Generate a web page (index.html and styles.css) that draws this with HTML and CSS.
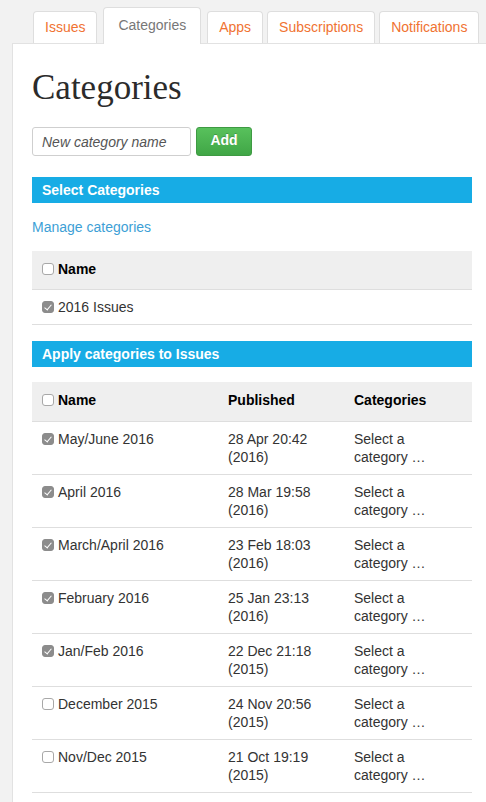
FILE: index.html
```html
<!DOCTYPE html>
<html>
<head>
<meta charset="utf-8">
<link rel="stylesheet" href="styles.css">
</head>
<body>
<nav class="tabs">
  <a class="tab">Issues</a>
  <a class="tab active">Categories</a>
  <a class="tab">Apps</a>
  <a class="tab">Subscriptions</a>
  <a class="tab">Notifications</a>
</nav>
<main class="panel">
  <h1 class="title">Categories</h1>
  <form class="add-form">
    <input class="name-input" type="text" placeholder="New category name">
    <button class="add-btn" type="button">Add</button>
  </form>

  <div class="bar">Select Categories</div>
  <a class="manage">Manage categories</a>

  <table class="grid first">
    <thead>
      <tr><th class="th-first"><span class="cb"></span>Name</th></tr>
    </thead>
    <tbody>
      <tr><td><span class="cb on"></span>2016 Issues</td></tr>
    </tbody>
  </table>

  <div class="bar">Apply categories to Issues</div>

  <table class="grid issues">
    <thead>
      <tr>
        <th class="c-name"><span class="cb"></span>Name</th>
        <th class="c-pub">Published</th>
        <th class="c-cat">Categories</th>
      </tr>
    </thead>
    <tbody>
      <tr><td><span class="cb on"></span>May/June 2016</td><td>28 Apr 20:42 (2016)</td><td>Select a category …</td></tr>
      <tr><td><span class="cb on"></span>April 2016</td><td>28 Mar 19:58 (2016)</td><td>Select a category …</td></tr>
      <tr><td><span class="cb on"></span>March/April 2016</td><td>23 Feb 18:03 (2016)</td><td>Select a category …</td></tr>
      <tr><td><span class="cb on"></span>February 2016</td><td>25 Jan 23:13 (2016)</td><td>Select a category …</td></tr>
      <tr><td><span class="cb on"></span>Jan/Feb 2016</td><td>22 Dec 21:18 (2015)</td><td>Select a category …</td></tr>
      <tr><td><span class="cb"></span>December 2015</td><td>24 Nov 20:56 (2015)</td><td>Select a category …</td></tr>
      <tr><td><span class="cb"></span>Nov/Dec 2015</td><td>21 Oct 19:19 (2015)</td><td>Select a category …</td></tr>
    </tbody>
  </table>
</main>
</body>
</html>
```

FILE: styles.css
```css
html, body {
  margin: 0;
  padding: 0;
}
body {
  background: #f2f2f2;
  font-family: "Liberation Sans", Arial, sans-serif;
  font-size: 14px;
  line-height: 18px;
  color: #333;
  height: 802px;
  overflow: hidden;
}
.tabs {
  display: flex;
  align-items: flex-end;
  gap: 4px;
  padding: 7px 0 0 33px;
  white-space: nowrap;
}
.tab {
  display: block;
  background: #fff;
  border: 1px solid #dedede;
  border-bottom: none;
  border-radius: 4px 4px 0 0;
  padding: 6px 11px 7px;
  color: #f07332;
  font-size: 14px;
  line-height: 18px;
}
.tab.active {
  color: #777;
  padding: 8px 14px 10px;
  margin: 0 2px -1px;
  position: relative;
  z-index: 1;
}
.panel {
  display: block;
  margin-left: 12px;
  background: #fff;
  border-top: 1px solid #e2e2e2;
  border-left: 1px solid #e2e2e2;
  padding: 0 14px 40px 19px;
  min-height: 800px;
}
.title {
  margin: 24px 0 0;
  font-family: "Liberation Serif", "Times New Roman", serif;
  font-weight: normal;
  font-size: 35px;
  line-height: 40px;
  color: #2b2b2b;
}
.add-form {
  display: flex;
  gap: 5px;
  margin: 19px 0 0;
}
.name-input {
  box-sizing: border-box;
  width: 159px;
  height: 29px;
  border: 1px solid #cfcfcf;
  border-radius: 3px;
  padding: 0 9px;
  font-family: "Liberation Sans", Arial, sans-serif;
  font-size: 14px;
  color: #333;
  margin: 0;
}
.name-input::placeholder {
  color: #555;
  font-style: italic;
}
.add-btn {
  box-sizing: border-box;
  width: 56px;
  height: 29px;
  margin: 0;
  border: 1px solid #3e9a43;
  border-radius: 3px;
  background: linear-gradient(#58c15c, #40a646);
  color: #fff;
  font-family: "Liberation Sans", Arial, sans-serif;
  font-weight: bold;
  font-size: 14px;
  text-shadow: 0 -1px 0 rgba(0,0,0,0.2);
  padding: 0 0 4px;
}
.bar {
  margin-top: 21px;
  height: 26px;
  line-height: 26px;
  background: #17ace5;
  color: #fff;
  font-weight: bold;
  padding-left: 10px;
}
.manage {
  display: block;
  margin-top: 14px;
  line-height: 20px;
  color: #3d9fd6;
}
.grid {
  width: 100%;
  border-collapse: collapse;
  margin-top: 14px;
}
.grid + .bar {
  margin-top: 16px;
}
.grid.issues {
  margin-top: 15px;
}
.grid th {
  background: #efefef;
  text-align: left;
  color: #000;
  font-weight: bold;
  padding: 9px 10px 12px;
  border-bottom: 1px solid #dedede;
  vertical-align: top;
}
.grid th.th-first {
  padding-bottom: 11px;
}
.grid td {
  padding: 8px 10px;
  border-bottom: 1px solid #dedede;
  vertical-align: top;
}
.c-name { width: 166px; }
.c-pub { width: 106px; }
.cb {
  display: inline-block;
  box-sizing: border-box;
  width: 12px;
  height: 12px;
  border: 1px solid #a8a8a8;
  border-radius: 3px;
  background: #fff;
  margin-right: 4px;
  vertical-align: -1px;
  position: relative;
}
.cb.on {
  background: #8c8c8c;
  border-color: #8c8c8c;
}
.cb.on::after {
  content: "";
  position: absolute;
  left: 3px;
  top: 1px;
  width: 3px;
  height: 6px;
  border: solid #fff;
  border-width: 0 1.5px 1.5px 0;
  transform: rotate(40deg);
}
```
